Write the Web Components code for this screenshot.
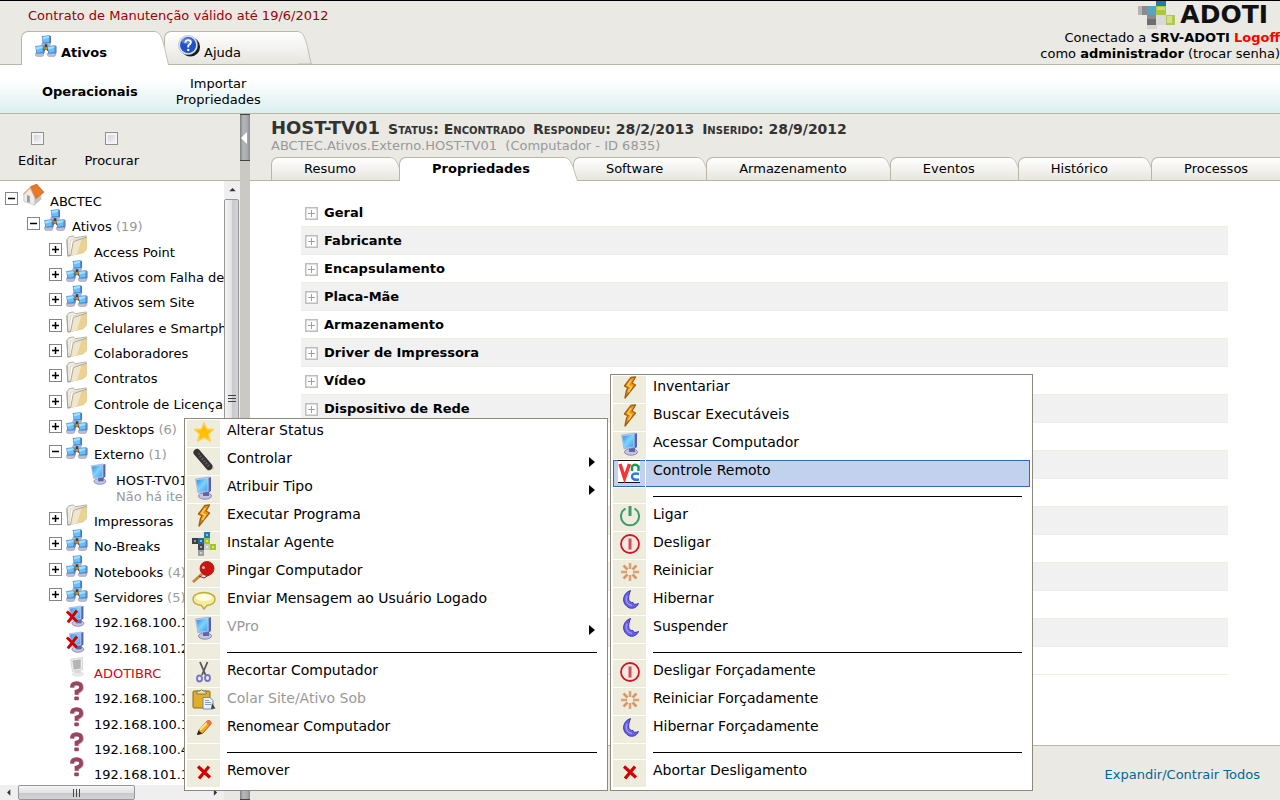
<!DOCTYPE html>
<html lang="pt-BR">
<head>
  <meta charset="utf-8">
  <title>ADOTI - HOST-TV01</title>
  <style>
    body {
      margin: 0;
      height: 100vh;
      overflow: hidden;
      display: flex;
      flex-direction: column;
      background: #eae9e3;
      color: #000;
      font: 13px/16px Verdana, "DejaVu Sans", sans-serif;
    }
    main {
      flex: 1;
      min-height: 0;
      display: flex;
    }
    .context-left {
      left: 184px;
      top: 418px;
      width: 424px;
    }
    .context-right {
      left: 610px;
      top: 374px;
      width: 423px;
    }
  </style>
</head>
<body>
  <app-header></app-header>
  <sub-nav></sub-nav>
  <main>
    <side-panel></side-panel>
    <split-bar></split-bar>
    <host-panel></host-panel>
  </main>

  <context-menu class="context-left">
    <menu-item icon="star">Alterar Status</menu-item>
    <menu-item icon="remote" submenu>Controlar</menu-item>
    <menu-item icon="monitor" submenu>Atribuir Tipo</menu-item>
    <menu-item icon="bolt">Executar Programa</menu-item>
    <menu-item icon="agent">Instalar Agente</menu-item>
    <menu-item icon="paddle">Pingar Computador</menu-item>
    <menu-item icon="bubble">Enviar Mensagem ao Usuário Logado</menu-item>
    <menu-item icon="monitor" submenu disabled>VPro</menu-item>
    <menu-line></menu-line>
    <menu-item icon="scissors">Recortar Computador</menu-item>
    <menu-item icon="paste" disabled>Colar Site/Ativo Sob</menu-item>
    <menu-item icon="pencil">Renomear Computador</menu-item>
    <menu-line></menu-line>
    <menu-item icon="cross">Remover</menu-item>
  </context-menu>

  <context-menu class="context-right">
    <menu-item icon="bolt">Inventariar</menu-item>
    <menu-item icon="bolt">Buscar Executáveis</menu-item>
    <menu-item icon="monitor">Acessar Computador</menu-item>
    <menu-item icon="vnc" selected>Controle Remoto</menu-item>
    <menu-line></menu-line>
    <menu-item icon="power">Ligar</menu-item>
    <menu-item icon="off">Desligar</menu-item>
    <menu-item icon="restart">Reiniciar</menu-item>
    <menu-item icon="moon">Hibernar</menu-item>
    <menu-item icon="moon">Suspender</menu-item>
    <menu-line></menu-line>
    <menu-item icon="off">Desligar Forçadamente</menu-item>
    <menu-item icon="restart">Reiniciar Forçadamente</menu-item>
    <menu-item icon="moon">Hibernar Forçadamente</menu-item>
    <menu-line></menu-line>
    <menu-item icon="cross">Abortar Desligamento</menu-item>
  </context-menu>

  <script>
    // all icons use a 24x24 box
    const screen = (id) => `
      <defs>
        <linearGradient id="${id}" x1="0" y1="0" x2="1" y2="1">
          <stop offset="0" stop-color="#2a86e8"/><stop offset=".5" stop-color="#7fd4fb"/><stop offset="1" stop-color="#3d9cf0"/>
        </linearGradient>
      </defs>
      <ellipse cx="13" cy="20" rx="6.500" ry="3.200" fill="#c4c5e2" stroke="#6a6aa0" stroke-width=".7"/>
      <path d="M11 15h6v5h-6z" fill="#6165a8"/>
      <path d="M16 2l3-1v14l-3 2z" fill="#5a60b0"/>
      <path d="M3.500 3L16.500 1V15.500L6 17z" fill="#b4cdf2" stroke="#8fa4d8" stroke-width=".6"/>
      <path d="M4.500 4.200L15.500 2.500V14.500L6.500 16z" fill="url(#${id})"/>`;

    const smallPc = (x, y) => `
      <g transform="translate(${x} ${y})">
        <ellipse cx="5" cy="10.200" rx="4.800" ry="2.600" fill="#bcbccc" stroke="#9898b0" stroke-width=".5"/>
        <path d="M9 .8l1.500.6v7l-1.500 1.500z" fill="#6c6ca4"/>
        <path d="M.3 1L9.200.3V8.800L1.500 9.500z" fill="#3c86dc"/>
        <path d="M1.200 1.800L8.300 1.200V7.600L2.200 8.300z" fill="#68c0f6"/>
        <path d="M1.200 1.800L8.300 1.200V3L1.500 5z" fill="#a4e0fc"/>
      </g>`;

    const tile = (x, y, color) => `
      <rect x="${x}" y="${y}" width="6" height="6" fill="${color}"/>
      <rect x="${x + 2}" y="${y + 2}" width="2" height="2" fill="#fff" opacity=".5"/>`;

    const redCross = (s) => `<path d="${s}" stroke="#d40000" stroke-width="3.200" fill="none"/>`;

    const ICONS = {
      network: `
        ${smallPc(7, 0)}
        <path d="M12 10v5M12 14l-5 4M12 14l5 4" stroke="#3c3c3c" stroke-width="3" fill="none"/>
        ${smallPc(0, 11)}${smallPc(13, 11)}
        <circle cx="12" cy="14.500" r="1.800" fill="#c09020"/>`,
      folder: `
        <path d="M1 5L3 2l5-1 2 2 12-2v14l-3 4L2 23z" fill="#eeebe0" stroke="#a9a598" stroke-width=".9"/>
        <path d="M5 6l15-3v14L4 21z" fill="#fff" stroke="#cfcabb" stroke-width=".6"/>
        <path d="M8 7L22.500 2.500V16.500L18 20 5 23z" fill="#ecd292"/>
        <path d="M8 7L17 4.500 12 21 5 23z" fill="#efe6cc"/>
        <path d="M1 5l1 18 3-.5L8 7 22.500 2.500" fill="none" stroke="#a09c90" stroke-width=".9"/>`,
      home: `
        <path d="M2 11l7-7 5 11v8l-12-4z" fill="#ececec" stroke="#b0b0b0" stroke-width=".6"/>
        <path d="M14 15l7-5v7l-7 6z" fill="#c4c4c4"/>
        <path d="M9 3l7-3 8 9-9 7z" fill="#e8792a" stroke="#b95a18" stroke-width=".6"/>
        <path d="M9 3l-8 8 1 1 7-7 5 10 1 1z" fill="#f4a668"/>
        <path d="M5.500 12l3 1v7.500l-3-1z" fill="#9a9a9a"/>`,
      help: `
        <circle cx="13.500" cy="13" r="10.500" fill="#1a1a1a"/>
        <circle cx="11" cy="11" r="10.500" fill="#dfe6f2" stroke="#9aa4b8" stroke-width=".6"/>
        <circle cx="11" cy="11" r="8.800" fill="#1f54c8"/>
        <ellipse cx="10" cy="6.500" rx="6" ry="3.500" fill="#fff" opacity=".25"/>
        <path d="M8 8.500Q8 5.500 11 5.500T14 8.300Q14 10 11.200 11.500V13.500" fill="none" stroke="#fff" stroke-width="2"/>
        <circle cx="11.200" cy="16.300" r="1.300" fill="#fff"/>`,
      star: `<path d="M12 3l2.600 6 6.800.5-5 4.800 2 6.700-6.400-3.500L5.600 21l2-6.700-5-4.800L9.400 9z" fill="#ffbf08" stroke="#ffd24a" stroke-width="1.500" stroke-linejoin="round"/>`,
      remote: `
        <path d="M4 5l12 17 6-2" stroke="#cfcdc2" stroke-width="2" fill="none"/>
        <path d="M5 4.500L17 18.500" stroke="#333" stroke-width="7" stroke-linecap="round"/>
        <path d="M8 8L17 18.500" stroke="#5b5b5b" stroke-width="3" stroke-dasharray="1.500 1.500"/>
        <circle cx="7" cy="6" r="1" fill="#a04040"/>`,
      monitor: screen('scr'),
      offline: `${screen('scr')}${redCross('M1 7l11 11M12 6L2 19')}`,
      inactive: `
        <ellipse cx="13" cy="19.500" rx="6" ry="2.500" fill="#ebebeb" stroke="#d4d4d4" stroke-width=".6"/>
        <path d="M10 15h6v4h-6z" fill="#d8d8d8"/>
        <path d="M5 3.500L18 1.500V15L7 17z" fill="#ededed" stroke="#cfcfcf" stroke-width=".8"/>
        <path d="M7 5L16 3.500V13.500L8.500 15z" fill="#b4b4b4"/>`,
      question: `
        <path d="M7.500 7.500Q7.500 3 12.500 3T17.500 7.500Q17.500 10 12.500 12V15.500" fill="none" stroke="#cfc8cc" stroke-width="4.500"/>
        <path d="M6.500 7Q6.500 2.500 11.500 2.500T16.500 7Q16.500 10 11.500 11.500V15" fill="none" stroke="#984462" stroke-width="4.200"/>
        <rect x="9" y="17" width="5" height="4" rx="1" fill="#984462"/>`,
      bolt: `
        <path d="M13 1.500l4.500-.5-3.500 6 3.500 2-5 6-5.500 7 1.500-7.500 1.500-3L6.500 10z" fill="#eb9a20" stroke="#a4600f" stroke-width="1.400" stroke-linejoin="round"/>
        <path d="M13 4l-3.500 5.500 4 1.500-3 5" stroke="#ffc848" stroke-width="1.500" fill="none"/>`,
      agent: `
        ${tile(12, 0, '#1d7fb4')}${tile(0, 6, '#3c3f44')}${tile(6, 6, '#1b6da0')}${tile(12, 6, '#a5c520')}
        ${tile(6, 12, '#44474c')}${tile(12, 12, '#c8cacc')}${tile(18, 12, '#a5c520')}${tile(6, 18, '#9da0a3')}`,
      paddle: `
        <path d="M1 22l9-8" stroke="#c8863c" stroke-width="3"/>
        <path d="M7 16l5 2 8-5" fill="none" stroke="#8a2020" stroke-width="1"/>
        <ellipse cx="15" cy="8.500" rx="7" ry="7" fill="#cc1410" stroke="#a01410" stroke-width=".8"/>
        <circle cx="11.500" cy="7.500" r="1.500" fill="#fff" opacity=".7"/>`,
      bubble: `
        <path d="M12 4.500c6 0 11 2.600 11 6.500s-4 6-8 6.500L12 21l-2.500-3.500C5 17 1 15 1 11s5-6.500 11-6.500z" fill="#f4eca0" stroke="#bfae3c" stroke-width="1.400"/>
        <ellipse cx="12" cy="9.500" rx="8" ry="3.500" fill="#fffde0"/>`,
      scissors: `
        <path d="M8 2l5.500 13M15.500 2L10 15" stroke="#585858" stroke-width="1.800"/>
        <ellipse cx="7.500" cy="18.500" rx="2.500" ry="3" fill="none" stroke="#7474c8" stroke-width="1.800"/>
        <ellipse cx="15.500" cy="18" rx="2.500" ry="3" fill="none" stroke="#7474c8" stroke-width="1.800"/>`,
      paste: `
        <rect x="1" y="3" width="17" height="17" rx="1" fill="#e2ad28" stroke="#8f6a10" stroke-width="1"/>
        <path d="M5 5V3h3q1.500-3 3 0h3v3H5z" fill="#e8dcb0" stroke="#6b6b50" stroke-width=".8"/>
        <path d="M11 9.500h7l3 3V21H11z" fill="#eaf2fb" stroke="#6a84a4" stroke-width=".9"/>
        <path d="M13 12.500h4M13 14.500h6M13 16.500h6" stroke="#86a0c0"/>
        <path d="M20 15l3.500 5.500-4.500.5z" fill="#404850"/>`,
      pencil: `
        <path d="M5.500 18.500L7 14l8-9q4-1 4 3l-8.500 9.500z" fill="#f5a623" stroke="#a85c10" stroke-width="1"/>
        <path d="M8 14l8-8.500" stroke="#ffe08a" stroke-width="2"/>
        <path d="M14 6l2-2q4 0 3.500 4L17 10z" fill="#e87838"/>
        <path d="M5 19l1.500-4.500 3.500 3z" fill="#222"/>`,
      cross: redCross('M6 6.500l12 11M17 6.500L7 18.500'),
      vnc: `
        <rect x="1" y="0" width="22" height="23" fill="#fff"/>
        <path d="M1 .5h22M1 22.500h22" stroke="#111" stroke-width="1"/>
        <path d="M3 4l4.500 14L12.500 4" fill="none" stroke="#f03838" stroke-width="3.500"/>
        <path d="M15 11V6.500Q18 3 21.500 6.500V11" fill="none" stroke="#0fa050" stroke-width="2.500"/>
        <path d="M22 14Q15 12.500 15 16.500T22 19.500" fill="none" stroke="#2a78f0" stroke-width="2.500"/>`,
      power: `
        <path d="M7.500 4.500a9 9 0 1 0 9 0" fill="none" stroke="#3f9a6c" stroke-width="2"/>
        <path d="M12 2v10" stroke="#3f9a6c" stroke-width="3"/>`,
      off: `
        <circle cx="12" cy="12" r="9" fill="#f6e8e4" stroke="#d01820" stroke-width="1.800"/>
        <path d="M12 6.500v11" stroke="#d05050" stroke-width="3"/>`,
      restart: `
        <g stroke="#e0a070" stroke-width="2.500">
          <path d="M12 3v6M12 15v6M3 12h6M15 12h6"/>
          <path d="M5.500 5.500l4 4M14.500 14.500l4 4M18.500 5.500l-4 4M9.500 14.500l-4 4" stroke="#d89468"/>
        </g>`,
      moon: `<path d="M12.500 2.500C5 5 3.500 13.500 8.500 18c4 4 10 2.500 12-2.500-3.500 1.500-5 1-5.500-1-5 .5-5.500-5-2.500-12z" fill="#6a60e4" stroke="#4034c0" stroke-width="1"/>
        <path d="M9 7.500c-2 5 0 9 5 10" fill="none" stroke="#9a94f4" stroke-width="1.500"/>`
    };

    class AppIcon extends HTMLElement {
      constructor() {
        super();
        this.shadowDOM = this.attachShadow({mode: 'open'});
      }

      connectedCallback() {
        this.shadowDOM.innerHTML = `
          <style>
            :host {
              display: block;
              flex: none;
              width: 22px;
              height: 22px;
            }
            svg {
              display: block;
              width: 100%;
              height: 100%;
            }
          </style>
          <svg viewBox="0 0 24 24" aria-hidden="true">${ICONS[this.getAttribute('name')]}</svg>
        `;
      }
    }

    customElements.define('app-icon', AppIcon);

    // tab with rounded left corner and slanted right side
    class TabItem extends HTMLElement {
      constructor() {
        super();
        this.shadowDOM = this.attachShadow({mode: 'open'});
      }

      connectedCallback() {
        const end = this.hasAttribute('active') ? '#fff' : '#e6e5df';
        this.shadowDOM.innerHTML = `
          <style>
            :host {
              display: block;
              flex: none;
              position: relative;
              height: 24px;
              margin-right: -5px;
            }
            :host([large]) {
              height: 34px;
              min-width: 148px;
            }
            :host([active]) {
              z-index: 1;
              font-weight: bold;
            }
            a {
              display: flex;
              height: 100%;
              color: inherit;
              text-decoration: none;
            }
            .body {
              flex: 1;
              box-sizing: border-box;
              padding: 3px 34px 0 32px;
              border: solid #bab5a5;
              border-width: 1px 0 1px 1px;
              border-top-left-radius: 7px;
              background: linear-gradient(#fff, #e6e5df);
            }
            :host([large]) .body {
              display: flex;
              gap: 4px;
              padding: 3px 10px 0 13px;
            }
            :host([large]) .label {
              padding-top: 10px;
            }
            :host([active]) .body {
              border-bottom: 0;
              background: #fff;
            }
            svg {
              width: 14px;
              height: 100%;
            }
          </style>
          <a href="#">
            <span class="body"><slot name="icon"></slot><span class="label"><slot></slot></span></span>
            <svg viewBox="0 0 14 24" preserveAspectRatio="none" aria-hidden="true">
              <defs><linearGradient id="fill" x1="0" y1="0" x2="0" y2="1"><stop offset="0" stop-color="#fff"/><stop offset="1" stop-color="${end}"/></linearGradient></defs>
              <path d="M0 .5C5 .5 7 5 9 10L13.500 24H0z" fill="url(#fill)"/>
              <path d="M0 .5C5 .5 7 5 9 10L13.500 24" fill="none" stroke="#c4c0b2" vector-effect="non-scaling-stroke"/>
              ${end === '#fff' ? '' : '<path d="M0 23.500h14" stroke="#bab5a5"/>'}
            </svg>
          </a>
        `;
      }
    }

    customElements.define('tab-item', TabItem);

    class AppHeader extends HTMLElement {
      constructor() {
        super();
        this.shadowDOM = this.attachShadow({mode: 'open'});
      }

      connectedCallback() {
        this.shadowDOM.innerHTML = `
          <style>
            :host {
              display: flex;
              justify-content: space-between;
              box-sizing: border-box;
              height: 65px;
              border-top: 1px solid #000;
              border-bottom: 1px solid #bab5a5;
            }
            .contract {
              margin: 7px 0 7px 28px;
              color: #9c0008;
            }
            nav {
              display: flex;
              margin: 0 0 -1px 21px;
            }
            .account {
              text-align: right;
            }
            .logo {
              display: flex;
              justify-content: flex-end;
              align-items: flex-start;
              gap: 5px;
              height: 29px;
              padding-right: 12px;
              font: bold 25px/28px "DejaVu Sans", sans-serif;
              color: #111;
            }
            .logo svg {
              width: 37px;
              height: 28px;
            }
            a {
              color: inherit;
              text-decoration: none;
            }
            .logoff {
              color: #f00;
              font-weight: bold;
            }
          </style>
          <div>
            <div class="contract">Contrato de Manutenção válido até 19/6/2012</div>
            <nav>
              <tab-item large active><app-icon slot="icon" name="network"></app-icon>Ativos</tab-item>
              <tab-item large><app-icon slot="icon" name="help"></app-icon>Ajuda</tab-item>
            </nav>
          </div>
          <div class="account">
            <div class="logo">
              <svg viewBox="0 0 37 28" aria-hidden="true">
                <path d="M0 5h9v9H0z" fill="#8b8b8b"/>
                <path d="M0 5h4v9H0z" fill="#b4b4b4"/>
                <path d="M9 5h10v9H9z" fill="#55a3c6"/>
                <path d="M18 0h10v5H18z" fill="#2a78a8"/>
                <path d="M18 5h10v9H18z" fill="#aec63c"/>
                <path d="M19 6h8v3h-8z" fill="#cbdc7a"/>
                <path d="M9 14h10v10H9z" fill="#6e6e70"/>
                <path d="M9 14h10v4H9z" fill="#8a8a8c"/>
                <path d="M18 14h10v10H18z" fill="#d9d9d9"/>
                <path d="M28 14h9v10h-9z" fill="#b2c850"/>
                <path d="M29 15h5v7h-5z" fill="#d2e08c"/>
                <path d="M9 24h10v4H9z" fill="#d6d5d0"/>
              </svg>
              <span>ADOTI</span>
            </div>
            <div>Conectado a <b>SRV-ADOTI</b> <a class="logoff" href="#">Logoff</a></div>
            <div>como <b>administrador</b> <a href="#">(trocar senha)</a></div>
          </div>
        `;
      }
    }

    customElements.define('app-header', AppHeader);

    class SubNav extends HTMLElement {
      constructor() {
        super();
        this.shadowDOM = this.attachShadow({mode: 'open'});
      }

      connectedCallback() {
        this.shadowDOM.innerHTML = `
          <style>
            :host {
              display: flex;
              flex: none;
              align-items: center;
              gap: 38px;
              box-sizing: border-box;
              height: 49px;
              padding: 6px 42px 0;
              border-bottom: 1px solid #bab5a5;
              background: linear-gradient(#fff 30%, #dbefef);
            }
            a {
              color: inherit;
              text-align: center;
              text-decoration: none;
            }
            .active {
              font-weight: bold;
            }
          </style>
          <a class="active" href="#">Operacionais</a>
          <a href="#">Importar<br>Propriedades</a>
        `;
      }
    }

    customElements.define('sub-nav', SubNav);

    class ScrollBar extends HTMLElement {
      constructor() {
        super();
        this.shadowDOM = this.attachShadow({mode: 'open'});
      }

      connectedCallback() {
        const vertical = this.hasAttribute('vertical');
        const back = vertical ? 'M4 9L8 5l4 4z' : 'M9 4L5 8l4 4z';
        const next = vertical ? 'M4 6l4 4 4-4z' : 'M6 4l4 4-4 4z';
        const grip = vertical ? 'M4 5.500h8M4 8.500h8M4 11.500h8' : 'M5.500 4v8M8.500 4v8M11.500 4v8';
        this.shadowDOM.innerHTML = `
          <style>
            :host {
              display: flex;
              background: #efefef;
            }
            :host([vertical]) {
              flex-direction: column;
            }
            button {
              flex: none;
              display: flex;
              align-items: center;
              justify-content: center;
              width: 18px;
              height: 15px;
              padding: 0;
              border: 0;
              background: none;
            }
            :host([vertical]) button {
              width: 16px;
              height: 18px;
            }
            .track {
              flex: 1;
            }
            .thumb {
              box-sizing: border-box;
              display: flex;
              align-items: center;
              justify-content: center;
              width: 62%;
              height: 15px;
              border: 1px solid #979797;
              border-radius: 2px;
              background: linear-gradient(#f5f5f5, #e2e2e4 50%, #c6c6cb 50%, #d4d4d8);
            }
            :host([vertical]) .thumb {
              width: 15px;
              height: 70%;
              background: linear-gradient(90deg, #f5f5f5, #e2e2e4 50%, #c6c6cb 50%, #d4d4d8);
            }
            svg {
              flex: none;
              width: 16px;
              height: 16px;
            }
            .arrow {
              width: 13px;
              height: 13px;
            }
          </style>
          <button aria-label="Voltar"><svg class="arrow" viewBox="0 0 16 16"><path d="${back}" fill="#333"/></svg></button>
          <div class="track"><div class="thumb"><svg viewBox="0 0 16 16"><path d="${grip}" stroke="#444"/></svg></div></div>
          <button aria-label="Avançar"><svg class="arrow" viewBox="0 0 16 16"><path d="${next}" fill="#333"/></svg></button>
        `;
      }
    }

    customElements.define('scroll-bar', ScrollBar);

    class TreeRow extends HTMLElement {
      constructor() {
        super();
        this.shadowDOM = this.attachShadow({mode: 'open'});
      }

      connectedCallback() {
        const state = this.getAttribute('state');
        const lines = state === 'open' ? 'M3 6.500h7' : 'M3 6.500h7M6.500 3v7';
        const toggle = state ? `
          <button aria-label="Expandir">
            <svg viewBox="0 0 13 13"><rect x=".5" y=".5" width="12" height="12" fill="#fff" stroke="#858585"/><path d="${lines}" stroke="#000" stroke-width="1.500"/></svg>
          </button>` : '<span class="blank"></span>';
        this.shadowDOM.innerHTML = `
          <style>
            :host {
              display: flex;
              gap: 4px;
              padding-left: calc(5px + 22px * var(--level));
            }
            button, .blank {
              flex: none;
              width: 13px;
              height: 13px;
              margin-top: 8px;
              padding: 0;
              border: 0;
              background: none;
            }
            button svg {
              display: block;
            }
            .label {
              padding: 10px 0 0 2px;
              white-space: nowrap;
            }
          </style>
          ${toggle}
          <app-icon name="${this.getAttribute('icon')}"></app-icon>
          <div class="label"><slot></slot></div>
        `;
      }
    }

    customElements.define('tree-row', TreeRow);

    // level, state, icon, text, count
    const TREE = [
      [0, 'open', 'home', 'ABCTEC'],
      [1, 'open', 'network', 'Ativos', 19],
      [2, 'closed', 'folder', 'Access Point'],
      [2, 'closed', 'network', 'Ativos com Falha de'],
      [2, 'closed', 'network', 'Ativos sem Site'],
      [2, 'closed', 'folder', 'Celulares e Smartph'],
      [2, 'closed', 'folder', 'Colaboradores'],
      [2, 'closed', 'folder', 'Contratos'],
      [2, 'closed', 'folder', 'Controle de Licença'],
      [2, 'closed', 'network', 'Desktops', 6],
      [2, 'open', 'network', 'Externo', 1],
      [3, '', 'monitor', 'HOST-TV01'],
      [2, 'closed', 'folder', 'Impressoras'],
      [2, 'closed', 'network', 'No-Breaks'],
      [2, 'closed', 'network', 'Notebooks', 4],
      [2, 'closed', 'network', 'Servidores', 5],
      [2, '', 'offline', '192.168.100.1'],
      [2, '', 'offline', '192.168.101.2'],
      [2, '', 'inactive', 'ADOTIBRC'],
      [2, '', 'question', '192.168.100.1'],
      [2, '', 'question', '192.168.100.1'],
      [2, '', 'question', '192.168.100.4'],
      [2, '', 'question', '192.168.101.1']
    ];

    class SidePanel extends HTMLElement {
      constructor() {
        super();
        this.shadowDOM = this.attachShadow({mode: 'open'});
      }

      connectedCallback() {
        this.render();
      }

      render() {
        const rows = TREE.map(([level, state, icon, text, count]) => `
          <tree-row style="--level: ${level}" state="${state}" icon="${icon}" ${icon === 'inactive' ? 'class="red"' : ''}>${text}${
            count ? ` <span class="gray">(${count})</span>` : ''}${
            level === 3 ? '<div class="gray">Não há itens</div>' : ''}</tree-row>`).join('');
        this.shadowDOM.innerHTML = `
          <style>
            :host {
              display: flex;
              flex-direction: column;
              flex: none;
              width: 240px;
            }
            .tools {
              display: flex;
              gap: 28px;
              padding: 18px 18px 11px;
              border-bottom: 1px solid #bab5a5;
            }
            label {
              display: flex;
              flex-direction: column;
              align-items: center;
              gap: 8px;
            }
            input {
              appearance: none;
              width: 13px;
              height: 13px;
              margin: 0;
              border: 1px solid #8e8f8f;
              background: linear-gradient(135deg, #c8ccd2, #fafafa);
              box-shadow: inset 0 0 0 2px #f4f4f4;
            }
            .view {
              flex: 1;
              min-height: 0;
              display: grid;
              grid-template: minmax(0, 1fr) 15px / minmax(0, 1fr) 16px;
              background: #fff;
            }
            .tree {
              overflow: hidden;
              padding-top: 3px;
            }
            tree-row {
              height: 25px;
            }
            /* every third row gets an extra pixel */
            tree-row:nth-child(3n) {
              padding-top: 1px;
            }
            tree-row:nth-child(12) {
              height: 41px;
            }
            .gray {
              color: #999;
            }
            .red {
              color: #d80018;
            }
            .corner {
              background: #e8e7e4;
            }
          </style>
          <div class="tools">
            <label><input type="checkbox">Editar</label>
            <label><input type="checkbox">Procurar</label>
          </div>
          <div class="view">
            <div class="tree">${rows}</div>
            <scroll-bar vertical></scroll-bar>
            <scroll-bar></scroll-bar>
            <div class="corner"></div>
          </div>
        `;
      }
    }

    customElements.define('side-panel', SidePanel);

    class SplitBar extends HTMLElement {
      constructor() {
        super();
        this.shadowDOM = this.attachShadow({mode: 'open'});
      }

      connectedCallback() {
        this.shadowDOM.innerHTML = `
          <style>
            :host {
              display: flex;
              flex-direction: column;
              justify-content: space-between;
              flex: none;
              width: 10px;
              background: #cac9c4;
            }
            button {
              width: 10px;
              height: 47px;
              padding: 0;
              border: 0;
              border-top: 1px solid #444;
              border-bottom: 1px solid #444;
              background: linear-gradient(90deg, #7d8081, #b4b7b9 30%, #a9adaf 70%, #8a8c8d);
            }
            svg {
              display: block;
              width: 8px;
              height: 12px;
            }
          </style>
          <button aria-label="Recolher"><svg viewBox="0 0 8 12"><path d="M7 0v12L1 6z" fill="#fff"/></svg></button>
          <button aria-label="Redimensionar"></button>
        `;
      }
    }

    customElements.define('split-bar', SplitBar);

    const GROUPS = [
      'Geral', 'Fabricante', 'Encapsulamento', 'Placa-Mãe', 'Armazenamento',
      'Driver de Impressora', 'Vídeo', 'Dispositivo de Rede',
      '', '', '', '', '', '', '', '', ''
    ];

    class HostPanel extends HTMLElement {
      constructor() {
        super();
        this.shadowDOM = this.attachShadow({mode: 'open'});
      }

      connectedCallback() {
        this.render();
      }

      render() {
        const groups = GROUPS.map((name) => `
          <li><button aria-label="Expandir"><svg viewBox="0 0 13 13"><rect x=".75" y=".75" width="11.500" height="11.500" fill="#fff" stroke="#bdbdbd" stroke-width="1.500"/><path d="M3 6.500h7M6.500 3v7" stroke="#a0a0a0"/></svg></button>${name}</li>`).join('');
        this.shadowDOM.innerHTML = `
          <style>
            :host {
              display: flex;
              flex-direction: column;
              flex: 1;
              min-width: 0;
            }
            header {
              padding: 6px 0 0 21px;
              box-shadow: inset 0 -1px #bab5a5;
              color: #333;
            }
            .title {
              display: flex;
              align-items: baseline;
              gap: 8px;
              height: 18px;
            }
            h1 {
              margin: 0;
              font-size: 18px;
              line-height: 16px;
            }
            .title span {
              font-size: 14px;
              font-weight: bold;
              font-variant: small-caps;
            }
            .path {
              color: #999;
              white-space: pre;
            }
            nav {
              display: flex;
              margin-top: 3px;
              overflow: hidden;
              color: #000;
            }
            .content {
              flex: 1;
              min-height: 0;
              overflow: hidden;
              padding: 18px 52px 0 51px;
              background: #fff;
            }
            ul {
              margin: 0;
              padding: 0;
              list-style: none;
              font-weight: bold;
            }
            li {
              display: flex;
              align-items: center;
              gap: 6px;
              box-sizing: border-box;
              height: 28px;
              padding: 1px 0 0 4px;
              border-bottom: 1px solid #efeee0;
            }
            li:nth-child(even) {
              background: #f1f1f1;
            }
            li button {
              width: 13px;
              height: 13px;
              padding: 0;
              border: 0;
              background: none;
            }
            li svg {
              display: block;
            }
            footer {
              padding: 21px 20px 17px;
              border-top: 1px solid #bab5a5;
              text-align: right;
            }
            footer a {
              color: #00679c;
              text-decoration: none;
            }
          </style>
          <header>
            <div class="title">
              <h1>HOST-TV01</h1>
              <span>Status: Encontrado</span>
              <span>Respondeu: 28/2/2013</span>
              <span>Inserido: 28/9/2012</span>
            </div>
            <div class="path">ABCTEC.Ativos.Externo.HOST-TV01  (Computador - ID 6835)</div>
            <nav>
              <tab-item>Resumo</tab-item>
              <tab-item active>Propriedades</tab-item>
              <tab-item>Software</tab-item>
              <tab-item>Armazenamento</tab-item>
              <tab-item>Eventos</tab-item>
              <tab-item>Histórico</tab-item>
              <tab-item>Processos</tab-item>
            </nav>
          </header>
          <div class="content"><ul>${groups}</ul></div>
          <footer><a href="#">Expandir/Contrair Todos</a></footer>
        `;
      }
    }

    customElements.define('host-panel', HostPanel);

    class MenuItem extends HTMLElement {
      constructor() {
        super();
        this.shadowDOM = this.attachShadow({mode: 'open'});
      }

      connectedCallback() {
        const disabled = this.hasAttribute('disabled') ? 'disabled' : '';
        const arrow = this.hasAttribute('submenu')
          ? '<svg viewBox="0 0 6 10" aria-hidden="true"><path d="M0 0l6 5-6 5z"/></svg>' : '';
        this.shadowDOM.innerHTML = `
          <style>
            :host {
              display: block;
              height: 28px;
            }
            button {
              display: flex;
              width: 100%;
              height: 27px;
              padding: 0;
              border: 0;
              background: none;
              color: #000;
              font: inherit;
              text-align: left;
            }
            button:disabled {
              color: #999;
            }
            .gutter {
              flex: none;
              display: flex;
              box-sizing: border-box;
              justify-content: center;
              width: 33px;
              height: 27px;
              background: #eeecdd;
            }
            app-icon {
              width: 24px;
              height: 24px;
            }
            .text {
              flex: 1;
              padding-left: 7px;
            }
            svg {
              align-self: center;
              width: 6px;
              height: 10px;
              margin-right: 10px;
            }
            :host([selected]) button {
              background: #c1d2ee;
              box-shadow: inset 0 0 0 1px #316ac5;
            }
            :host([selected]) .gutter {
              background: none;
              border-right: 1px solid #fff;
            }
          </style>
          <button role="menuitem" ${disabled}>
            <span class="gutter"><app-icon name="${this.getAttribute('icon')}"></app-icon></span>
            <span class="text"><slot></slot></span>
            ${arrow}
          </button>
        `;
      }
    }

    customElements.define('menu-item', MenuItem);

    class MenuLine extends HTMLElement {
      constructor() {
        super();
        this.shadowDOM = this.attachShadow({mode: 'open'});
      }

      connectedCallback() {
        this.shadowDOM.innerHTML = `
          <style>
            :host {
              display: flex;
              align-items: center;
              gap: 7px;
              height: 16px;
              padding-right: 8px;
            }
            span {
              width: 33px;
              height: 15px;
              align-self: flex-start;
              background: #eeecdd;
            }
            hr {
              flex: 1;
              margin: 0;
              border: 0;
              border-top: 1px solid #000;
            }
          </style>
          <span></span><hr>
        `;
      }
    }

    customElements.define('menu-line', MenuLine);

    class ContextMenu extends HTMLElement {
      constructor() {
        super();
        this.shadowDOM = this.attachShadow({mode: 'open'});
      }

      connectedCallback() {
        this.setAttribute('role', 'menu');
        this.shadowDOM.innerHTML = `
          <style>
            :host {
              position: absolute;
              z-index: 10;
              box-sizing: border-box;
              padding: 1px 2px 2px;
              border: 1px solid #8d8a7a;
              background: #fff;
              font-size: 14px;
              line-height: 21px;
            }
          </style>
          <slot></slot>
        `;
      }
    }

    customElements.define('context-menu', ContextMenu);
  </script>
</body>
</html>
